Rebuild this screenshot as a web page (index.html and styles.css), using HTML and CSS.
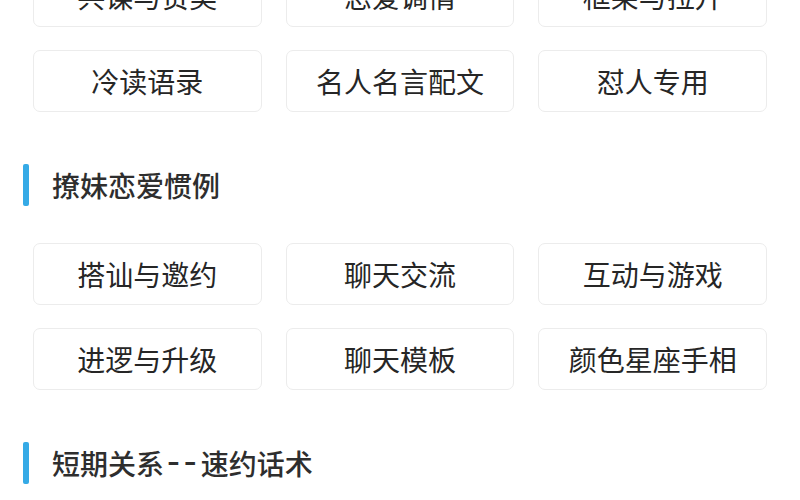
FILE: index.html
```html
<!DOCTYPE html>
<html lang="zh-CN">
<head>
<meta charset="utf-8">
<title>话术分类</title>
<link rel="stylesheet" href="styles.css">
</head>
<body>
<main class="page">
  <section class="group">
    <div class="grid">
      <a class="tile">共谋与赞美</a>
      <a class="tile">恋爱调情</a>
      <a class="tile">框架与拉升</a>
      <a class="tile">冷读语录</a>
      <a class="tile">名人名言配文</a>
      <a class="tile">怼人专用</a>
    </div>
  </section>

  <section class="group">
    <h2 class="group-title"><span class="bar"></span>撩妹恋爱惯例</h2>
    <div class="grid">
      <a class="tile">搭讪与邀约</a>
      <a class="tile">聊天交流</a>
      <a class="tile">互动与游戏</a>
      <a class="tile">进逻与升级</a>
      <a class="tile">聊天模板</a>
      <a class="tile">颜色星座手相</a>
    </div>
  </section>

  <section class="group">
    <h2 class="group-title"><span class="bar"></span><span>短期关系<span class="dash">--</span>速约话术</span></h2>
  </section>
</main>
</body>
</html>
```

FILE: styles.css
```css
html, body {
  margin: 0;
  padding: 0;
  background: #ffffff;
}

body {
  font-family: "Noto Sans CJK SC", "Noto Sans", sans-serif;
  color: #333333;
  overflow: hidden;
}

.page {
  margin-top: -35px;
  display: flex;
  flex-direction: column;
  gap: 52px;
}

.group {
  display: flex;
  flex-direction: column;
  gap: 37px;
}

.group-title {
  margin: 0;
  padding-left: 23px;
  display: flex;
  align-items: center;
  gap: 23px;
  height: 42px;
  font-size: 28px;
  font-weight: 500;
  line-height: 1;
  color: #2e2e2e;
}

/* the double hyphen in a title is set wide, like a short rule */
.dash {
  padding-left: 3px;
  font-size: 36px;
  line-height: 0;
  letter-spacing: 4px;
  vertical-align: 1px;
}

.bar {
  width: 6px;
  height: 42px;
  border-radius: 2px;
  background: #35aae6;
}

.grid {
  padding: 0 33px;
  display: grid;
  grid-template-columns: repeat(3, 1fr);
  column-gap: 24px;
  row-gap: 23px;
}

.tile {
  height: 62px;
  box-sizing: border-box;
  border: 1px solid #ececec;
  border-radius: 7px;
  display: flex;
  align-items: center;
  justify-content: center;
  font-size: 28px;
  line-height: 1;
  color: #262626;
  text-decoration: none;
}
```
